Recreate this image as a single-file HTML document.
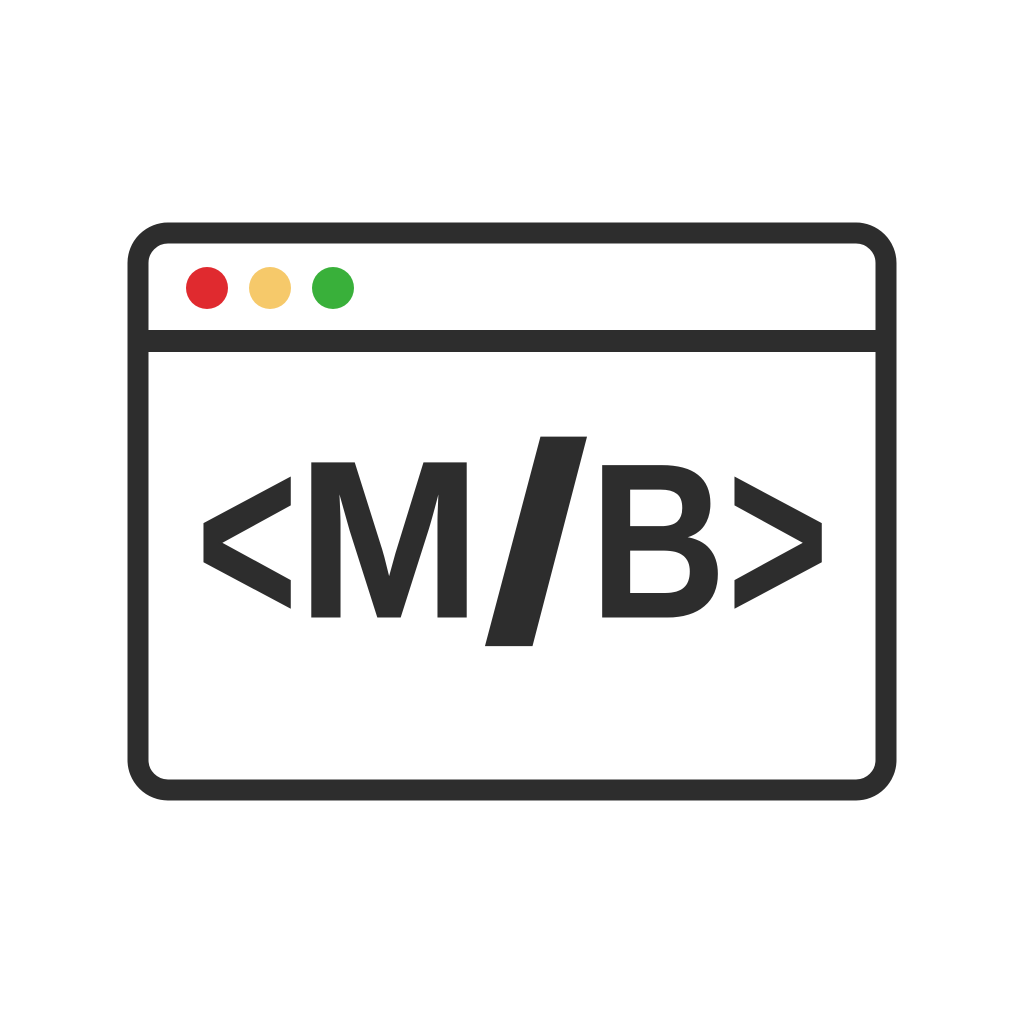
<!DOCTYPE html>
<html><head><meta charset="utf-8"><style>html,body{margin:0;background:#fff}svg{display:block}</style></head>
<body>
<svg width="1024" height="1024" viewBox="0 0 1024 1024" xmlns="http://www.w3.org/2000/svg">
<rect x="138" y="233" width="748" height="557" rx="30" fill="none" stroke="#2d2d2d" stroke-width="21"/>
<rect x="138" y="330" width="748" height="22" fill="#2d2d2d"/>
<circle cx="207" cy="288" r="21" fill="#e02a2f"/>
<circle cx="270" cy="288" r="21" fill="#f6c96a"/>
<circle cx="333" cy="288" r="21" fill="#39b03a"/>
<g fill="#2d2d2d" font-family="Liberation Sans, sans-serif" font-weight="bold" stroke="#2d2d2d">
<text x="297" y="617" font-size="224" textLength="184" lengthAdjust="spacingAndGlyphs" stroke-width="1">M</text>
<text x="590" y="617" font-size="220" textLength="136" lengthAdjust="spacingAndGlyphs" stroke-width="1">B</text>
<text x="482" y="640" font-size="280" textLength="108" lengthAdjust="spacingAndGlyphs" stroke-width="1">/</text>
<text x="197" y="622" font-size="240" textLength="100" lengthAdjust="spacingAndGlyphs" stroke-width="2">&lt;</text>
<text x="728" y="622" font-size="240" textLength="100" lengthAdjust="spacingAndGlyphs" stroke-width="2">&gt;</text>
</g>
</svg>
</body></html>
